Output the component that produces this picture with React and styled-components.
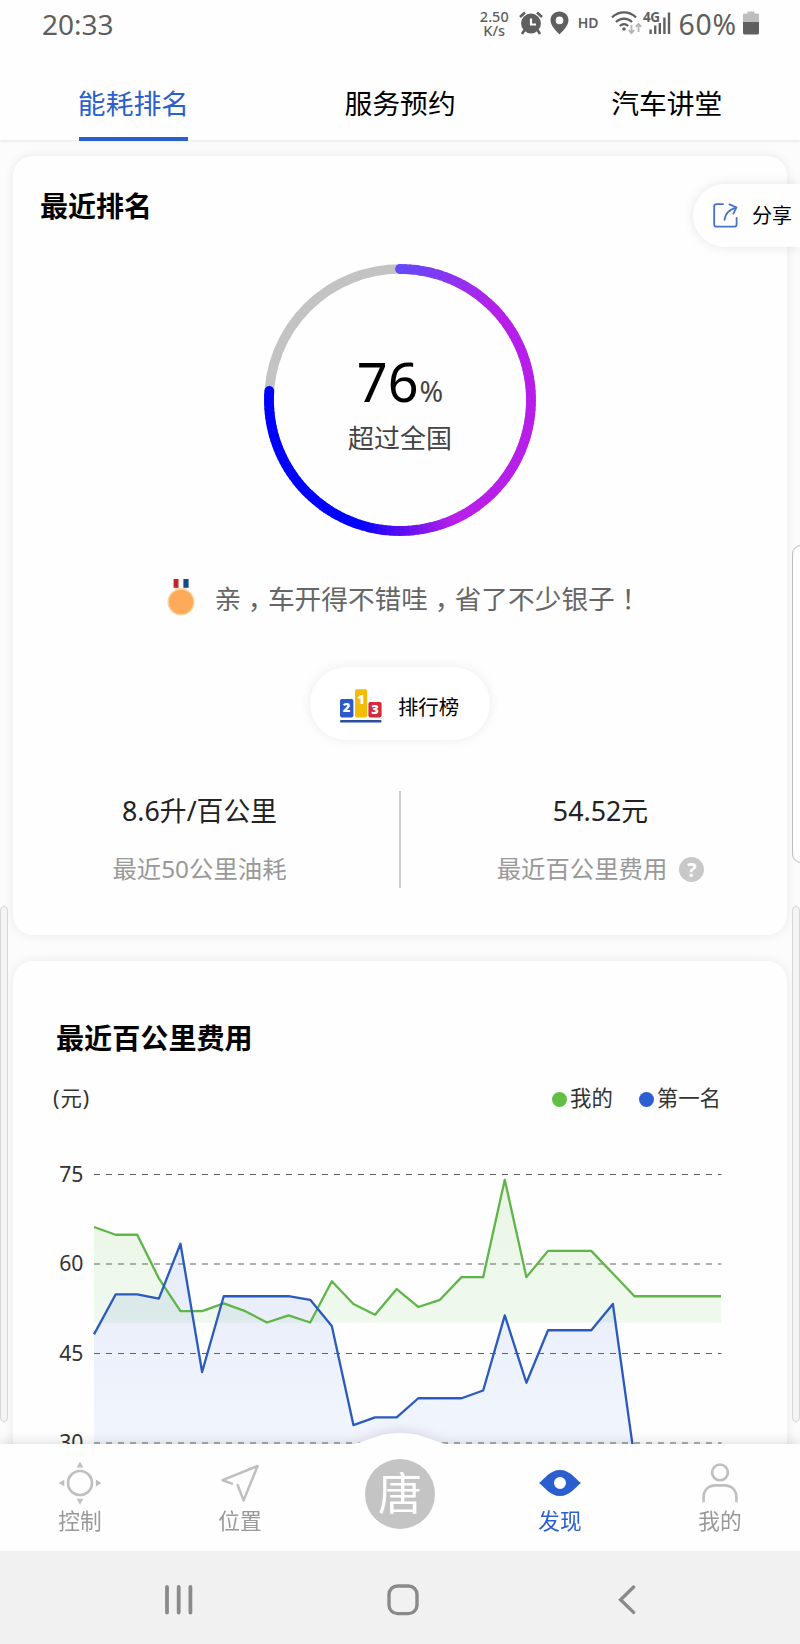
import React from 'react'
import styled, { createGlobalStyle } from 'styled-components';

const BLUE = '#2b5fd0';

const mine = [
  66.2, 64.9, 64.9, 57.6, 52.1, 52.1, 53.4, 52.1, 50.2, 51.4, 50.2, 57.1, 53.3, 51.5, 55.8,
  52.8, 54, 57.8, 57.8, 74.1, 57.8, 62.2, 62.2, 62.2, 58.4, 54.6, 54.6, 54.6, 54.6, 54.6,
];
const first = [
  48.2, 54.9, 54.9, 54.2, 63.4, 41.9, 54.6, 54.6, 54.6, 54.6, 54, 49.6, 33, 34.3, 34.3,
  37.5, 37.5, 37.5, 38.8, 51.4, 40.1, 48.9, 48.9, 48.9, 53.3, 27.3,
];

const CHART_LEFT = 81;
const CHART_RIGHT = 708.5;
const toX = (i) => CHART_LEFT + i * 21.62;
const toY = (v) => 34.5 + (75 - v) * 5.967;
const toLine = (data) => data.map((v, i) => `${toX(i)},${toY(v)}`).join(' ');

const CostChart = () => (
  <ChartSvg viewBox="0 0 774 340">
    <defs>
      <linearGradient id="mineFill" x1="0" y1="0" x2="0" y2="1">
        <stop offset="0" stopColor="#5fc044" stopOpacity="0.13" />
        <stop offset="1" stopColor="#5fc044" stopOpacity="0.09" />
      </linearGradient>
      <linearGradient id="firstFill" x1="0" y1="0" x2="0" y2="1">
        <stop offset="0" stopColor="#2b5fd0" stopOpacity="0.12" />
        <stop offset="1" stopColor="#3b6fe8" stopOpacity="0.05" />
      </linearGradient>
    </defs>
    {[75, 60, 45, 30].map((v) => (
      <g key={v}>
        <AxisLabel x="70.5" y={toY(v) + 7}>{v}</AxisLabel>
        <line x1={CHART_LEFT} x2={CHART_RIGHT} y1={toY(v)} y2={toY(v)} stroke="#606060" strokeWidth="1.2" strokeDasharray="6 6" />
      </g>
    ))}
    <polygon points={`${toLine(mine)} ${toX(29)},${toY(50.2)} ${toX(0)},${toY(50.2)}`} fill="url(#mineFill)" />
    <polygon points={`${toLine(first)} ${toX(25)},340 ${toX(0)},340`} fill="url(#firstFill)" />
    <polyline points={toLine(mine)} fill="none" stroke="#5fb548" strokeWidth="2.3" strokeLinejoin="round" />
    <polyline points={toLine(first)} fill="none" stroke="#2a5abf" strokeWidth="2.3" strokeLinejoin="round" />
  </ChartSvg>
);

// sweep stops of the ring: angle, then rgb
const stops = [
  [0, [101, 72, 248]],
  [45, [182, 31, 233]],
  [155, [184, 31, 232]],
  [180, [84, 14, 244]],
  [198, [0, 0, 255]],
  [274, [0, 0, 255]],
];

const sweepColor = (deg) => {
  const i = Math.max(1, stops.findIndex((s) => s[0] >= deg));
  const [a, from] = stops[i - 1];
  const [b, to] = stops[i];
  const t = (deg - a) / (b - a);
  return `rgb(${from.map((c, k) => Math.round(c + (to[k] - c) * t)).join(',')})`;
};

const ringPoint = (deg) => {
  const rad = (deg * Math.PI) / 180;
  return `${136 + 131 * Math.sin(rad)} ${136 - 131 * Math.cos(rad)}`;
};

const Ring = ({ percent }) => {
  const end = Math.round(percent * 3.6);
  const parts = [];
  for (let d = 0; d < end; d += 2) parts.push(d);
  return (
    <svg width="272" height="272" viewBox="0 0 272 272">
      <circle cx="136" cy="136" r="131" fill="none" stroke="#c3c3c3" strokeWidth="9.6" />
      {parts.map((d) => (
        <path
          key={d}
          d={`M${ringPoint(d)} A131 131 0 0 1 ${ringPoint(Math.min(d + 2.4, end))}`}
          fill="none"
          stroke={sweepColor(d)}
          strokeWidth="9.8"
          strokeLinecap={d === 0 || d + 2 >= end ? 'round' : 'butt'}
        />
      ))}
    </svg>
  );
};

const AlarmIcon = () => (
  <svg width="24" height="24" viewBox="0 0 24 24">
    <g stroke="#5f5f5f" strokeWidth="2.6" fill="none">
      <path d="M1 6 L6 1.6 M18 1.6 L23 6" />
      <path d="M5.5 19 L3 23 M18.5 19 L21 23" />
    </g>
    <circle cx="12" cy="12.5" r="9.9" fill="#5f5f5f" />
    <path d="M12 7.5 V13.5 H17" fill="none" stroke="#fff" strokeWidth="2.2" />
  </svg>
);

const PinIcon = () => (
  <svg width="19" height="24" viewBox="0 0 19 24">
    <path fillRule="evenodd" fill="#5f5f5f" d="M9.5 0.5 C4.4 0.5 0.5 4.4 0.5 9.2 C0.5 15.5 9.5 23.4 9.5 23.4 S18.5 15.5 18.5 9.2 C18.5 4.4 14.6 0.5 9.5 0.5 Z M9.5 5.6 A3.8 3.8 0 1 1 9.5 13.2 A3.8 3.8 0 1 1 9.5 5.6 Z" />
  </svg>
);

const WifiIcon = () => (
  <svg width="31" height="25" viewBox="0 0 31 25">
    <g fill="none" stroke="#5f5f5f" strokeWidth="2.2">
      <path d="M1 6.4 C8 -0.2 18 -0.2 25 6.4" />
      <path d="M5 11 C9.6 6.6 16.4 6.6 21 11" />
      <path d="M8.8 15 C11.4 12.6 14.6 12.6 17.2 15" />
    </g>
    <circle cx="13" cy="18" r="1.8" fill="#5f5f5f" />
    <g fill="none" stroke="#b5b5b5" strokeWidth="1.8">
      <path d="M20.5 14 V22 M17.8 19.2 L20.5 22.2 L23.2 19.2" />
      <path d="M27.5 21 V13 M24.8 15.8 L27.5 12.8 L30.2 15.8" />
    </g>
  </svg>
);

const SignalIcon = () => (
  <svg width="27" height="24" viewBox="0 0 27 24" overflow="visible">
    <SignalText x="-1" y="10.5">4G</SignalText>
    <g fill="#5f5f5f">
      <rect x="5.4" y="18.5" width="2.4" height="4.5" />
      <rect x="10" y="14.5" width="2.4" height="8.5" />
      <rect x="14.6" y="12" width="2.4" height="11" />
      <rect x="19.2" y="6.5" width="2.4" height="16.5" />
      <rect x="23.8" y="1.5" width="2.4" height="21.5" />
    </g>
  </svg>
);

const BatteryIcon = () => (
  <svg width="16" height="24" viewBox="0 0 16 24">
    <path d="M4.5 0.5 H11.5 V2.5 H15 Q16 2.5 16 3.5 V12 H0 V3.5 Q0 2.5 1 2.5 H4.5 Z" fill="#bdbdbd" />
    <path d="M0 11 H16 V22 Q16 23.5 14.5 23.5 H1.5 Q0 23.5 0 22 Z" fill="#5f5f5f" />
  </svg>
);

const ShareIcon = () => (
  <svg width="25" height="25" viewBox="0 0 25 25" fill="none" stroke="#4773c4" strokeWidth="1.8" strokeLinecap="round">
    <path d="M10 1.2 H3.4 Q1.2 1.2 1.2 3.4 V21.4 Q1.2 23.6 3.4 23.6 H21.4 Q23.6 23.6 23.6 21.4 V15" />
    <path d="M11.5 16.8 C12 11.5 15.5 7 22.8 4.6" />
    <path d="M16.4 1.4 L23.4 4.4 L20.4 10.6" />
  </svg>
);

const MedalIcon = () => (
  <svg width="30" height="40" viewBox="0 0 30 40">
    <path d="M8.5 13 L9.5 9 H20.5 L21.5 13 Z" fill="#fbe3c4" />
    <rect x="7.6" y="0" width="5.2" height="8.8" fill="#c0222e" />
    <rect x="12.6" y="0" width="5" height="8.8" fill="#fafafa" />
    <rect x="17.4" y="0" width="5.2" height="8.8" fill="#154a8c" />
    <circle cx="15" cy="23" r="13.6" fill="#fbd7a5" />
    <circle cx="15" cy="23" r="12.2" fill="#fdab5b" />
  </svg>
);

const PodiumIcon = () => (
  <svg width="42" height="35" viewBox="0 0 42 35">
    <rect x="0" y="10" width="13.4" height="18.4" rx="1.8" fill="#2c5acb" />
    <rect x="15" y="0.3" width="12.2" height="28.1" rx="1.8" fill="#f2bd08" />
    <rect x="28.4" y="13" width="13.2" height="15.4" rx="1.8" fill="#d32a3c" />
    <rect x="0" y="31" width="41.5" height="2.6" rx="1.2" fill="#2b4f9d" />
    <PodiumText x="6.6" y="22.6">2</PodiumText>
    <PodiumText x="21" y="14.6">1</PodiumText>
    <PodiumText x="35" y="24.8">3</PodiumText>
  </svg>
);

const ControlIcon = () => (
  <svg width="44" height="44" viewBox="0 0 44 44">
    <circle cx="22" cy="22" r="12" fill="none" stroke="#bfbfbf" strokeWidth="2.6" />
    <path fill="#bfbfbf" d="M22 0.5 L25.3 6.5 H18.7 Z M22 43.5 L25.3 37.8 H18.7 Z M0.5 22 L6.3 18.7 V25.3 Z M43.5 22 L37.9 18.4 V25.6 Z" />
  </svg>
);

const LocationIcon = () => (
  <svg width="40" height="40" viewBox="0 0 40 40" fill="none" stroke="#bfbfbf" strokeWidth="2.5" strokeLinejoin="round" strokeLinecap="round">
    <path d="M12 20.6 L2.6 17.2 L37.6 3 L23.6 37.4 L17.6 22" />
  </svg>
);

const EyeIcon = () => (
  <svg width="42" height="28" viewBox="0 0 42 28">
    <path fillRule="evenodd" fill={BLUE} d="M0 14 C6 9.5 11 1 21 1 S36 9.5 42 14 C36 18.5 31 27 21 27 S6 18.5 0 14 Z M21 8 A6 6 0 1 0 21 20 A6 6 0 1 0 21 8 Z" />
  </svg>
);

const PersonIcon = () => (
  <svg width="36" height="40" viewBox="0 0 36 40" fill="none" stroke="#bfbfbf" strokeWidth="2.6">
    <circle cx="18" cy="9.4" r="7.9" />
    <path d="M1.6 39.2 V34.5 C1.6 27 6.5 22.4 13.5 22.4 H22.5 C29.5 22.4 34.4 27 34.4 34.5 V39.2" />
  </svg>
);

const App = () => {
  return (
    <Phone>
      <GlobalStyle />
      <StatusBar>
        <Clock>20:33</Clock>
        <Speed>
          <span>2.50</span>
          <span>K/s</span>
        </Speed>
        <StatusItem gap={10}><AlarmIcon /></StatusItem>
        <StatusItem gap={7}><PinIcon /></StatusItem>
        <Hd>HD</Hd>
        <StatusItem gap={12}><WifiIcon /></StatusItem>
        <StatusItem gap={2}><SignalIcon /></StatusItem>
        <BatteryText>60%</BatteryText>
        <StatusItem gap={6}><BatteryIcon /></StatusItem>
      </StatusBar>

      <Tabs>
        <Tab><TabLabel $active>能耗排名</TabLabel></Tab>
        <Tab><TabLabel>服务预约</TabLabel></Tab>
        <Tab><TabLabel>汽车讲堂</TabLabel></Tab>
      </Tabs>

      <Content>
        <RankCard>
          <RankTitle>最近排名</RankTitle>
          <RingBox>
            <Ring percent={76} />
            <RingText>
              <Percent>76<small>%</small></Percent>
              <RingCaption>超过全国</RingCaption>
            </RingText>
          </RingBox>
          <Message>
            <MedalIcon />
            <p>亲<Mark>，</Mark>车开得不错哇<Mark>，</Mark>省了不少银子<Mark>！</Mark></p>
          </Message>
          <RankButton>
            <PodiumIcon />
            <span>排行榜</span>
          </RankButton>
          <Stats>
            <Stat>
              <StatValue>8.6升/百公里</StatValue>
              <StatLabel>最近50公里油耗</StatLabel>
            </Stat>
            <Divider />
            <Stat>
              <StatValue>54.52元</StatValue>
              <StatLabel>最近百公里费用<Help>?</Help></StatLabel>
            </Stat>
          </Stats>
        </RankCard>

        <CostCard>
          <CostTitle>最近百公里费用</CostTitle>
          <LegendRow>
            <Unit>(元)</Unit>
            <Legend color="#5fc044">我的</Legend>
            <Legend color={BLUE}>第一名</Legend>
          </LegendRow>
          <CostChart />
        </CostCard>
      </Content>

      <ShareButton>
        <ShareIcon />
        <span>分享</span>
      </ShareButton>
      <EdgePanel />
      <EdgeBar $side="left" />
      <EdgeBar $side="right" />

      <BottomNav>
        <Bump viewBox="0 0 120 20">
          <path d="M0 20 V12.5 H8 C24 12.5 34 1 60 1 S96 12.5 112 12.5 H120 V20 Z" fill="#fefefe" />
        </Bump>
        <NavItem>
          <NavIcon><ControlIcon /></NavIcon>
          <span>控制</span>
        </NavItem>
        <NavItem>
          <NavIcon><LocationIcon /></NavIcon>
          <span>位置</span>
        </NavItem>
        <NavItem>
          <CarLogo>唐</CarLogo>
        </NavItem>
        <NavItem $active>
          <NavIcon><EyeIcon /></NavIcon>
          <span>发现</span>
        </NavItem>
        <NavItem>
          <NavIcon><PersonIcon /></NavIcon>
          <span>我的</span>
        </NavItem>
      </BottomNav>

      <SystemNav>
        <SystemKey>
          <svg width="30" height="32" viewBox="0 0 30 32" stroke="#8a8a8a" strokeWidth="3.8" strokeLinecap="round">
            <path d="M3 3 V28.5 M14.7 3 V28.5 M26.4 3 V28.5" />
          </svg>
        </SystemKey>
        <SystemKey>
          <svg width="32" height="32" viewBox="0 0 32 32" fill="none" stroke="#8a8a8a" strokeWidth="3.4">
            <rect x="2" y="2" width="28" height="27.6" rx="8.5" />
          </svg>
        </SystemKey>
        <SystemKey>
          <svg width="18" height="32" viewBox="0 0 18 32" fill="none" stroke="#8a8a8a" strokeWidth="3.4" strokeLinecap="round">
            <path d="M15.6 3 L2.6 15.8 L15.6 28.4" />
          </svg>
        </SystemKey>
      </SystemNav>
    </Phone>
  );
};

export default App;

const GlobalStyle = createGlobalStyle`
* {
  box-sizing: border-box;
}

body {
  margin: 0;
  background: #fefefe;
}

p {
  margin: 0;
}

svg {
  display: block;
  flex-shrink: 0;
}
`;

const Phone = styled.div`
  position: relative;
  display: flex;
  flex-direction: column;
  width: 800px;
  height: 1644px;
  overflow: hidden;
  background: #fcfcfc;
  color: #000;
  font-family: "Noto Sans", "Noto Sans CJK SC", sans-serif;
`;

const StatusBar = styled.div`
  position: relative;
  z-index: 2;
  display: flex;
  align-items: center;
  height: 50px;
  padding: 0 41px 4px 42px;
  background: #fefefe;
  color: #5f5f5f;
`;

const Clock = styled.div`
  flex: 1;
  font-size: 28px;
  line-height: 40px;
  padding-top: 2px;
`;

const Speed = styled.div`
  display: flex;
  flex-direction: column;
  align-items: center;
  font-size: 14.5px;
  font-weight: 500;
  line-height: 14px;
`;

const StatusItem = styled.div`
  margin-left: ${(props) => props.gap}px;
`;

const Hd = styled.div`
  margin-left: 9px;
  font-size: 14px;
  font-weight: 600;
  line-height: 20px;
`;

const SignalText = styled.text`
  font-size: 13.5px;
  font-weight: 700;
  letter-spacing: -0.5px;
  fill: #5f5f5f;
`;

const BatteryText = styled.div`
  margin-left: 8px;
  font-size: 28.4px;
  line-height: 40px;
  letter-spacing: 0.8px;
  padding-top: 2px;
`;

const Tabs = styled.div`
  position: relative;
  z-index: 1;
  display: flex;
  height: 90px;
  background: #fefefe;
  box-shadow: 0 1px 4px rgba(0, 0, 0, 0.09);
`;

const Tab = styled.div`
  display: flex;
  flex: 1;
  justify-content: center;
`;

const TabLabel = styled.div`
  width: 109px;
  height: 91px;
  padding-top: 33px;
  font-size: 27.8px;
  line-height: 40px;
  text-indent: -1px;
  white-space: nowrap;
  color: ${(props) => (props.$active ? BLUE : '#000')};
  border-bottom: 4px solid ${(props) => (props.$active ? BLUE : 'transparent')};
`;

const Content = styled.div`
  flex: 1;
  min-height: 0;
  padding: 16px 13px 0;
  overflow: hidden;
`;

const Card = styled.section`
  background: #fefefe;
  border-radius: 20px;
  box-shadow: 0 0 12px rgba(0, 0, 0, 0.08);
`;

const RankCard = styled(Card)`
  display: flex;
  flex-direction: column;
  align-items: center;
  height: 779px;
  padding-top: 30px;
`;

const RankTitle = styled.h2`
  align-self: flex-start;
  margin: 0 0 38px 27px;
  font-size: 28px;
  font-weight: 600;
  line-height: 40px;
`;

const RingBox = styled.div`
  display: grid;
  place-items: center;

  > * {
    grid-area: 1 / 1;
  }
`;

const RingText = styled.div`
  display: flex;
  flex-direction: column;
  align-items: center;
  padding-top: 9px;
`;

const Percent = styled.div`
  font-size: 54px;
  line-height: 58px;

  small {
    margin-left: 1px;
    font-size: 28.5px;
    color: #444;
  }
`;

const RingCaption = styled.div`
  margin-top: -2px;
  font-size: 26px;
  line-height: 40px;
  color: #444;
`;

const Message = styled.div`
  display: flex;
  align-items: center;
  gap: 19px;
  margin: 43px 0 0 7px;
  font-size: 26.7px;
  line-height: 40px;
  color: #666;
`;

// half-width form of the punctuation, set in the middle of a full cell
const Mark = styled.span`
  padding: 0 0.25em;
  font-feature-settings: "halt";
`;

const RankButton = styled.button`
  display: flex;
  align-items: center;
  justify-content: center;
  gap: 16px;
  width: 180px;
  height: 73px;
  margin-top: 48px;
  padding: 6px 1px 0 0;
  border: 0;
  border-radius: 37px;
  background: #fff;
  box-shadow: 0 0 12px rgba(0, 0, 0, 0.08);
  color: #000;
  font-family: inherit;
  font-size: 20.4px;
  line-height: 30px;
`;

const PodiumText = styled.text`
  font-family: "Open Sans", sans-serif;
  font-size: 13px;
  font-weight: 800;
  text-anchor: middle;
  fill: #fff;
`;

const Stats = styled.div`
  display: flex;
  flex-shrink: 0;
  width: 800px;
  height: 97px;
  margin-top: 51px;
`;

const Stat = styled.div`
  display: flex;
  flex: 1;
  flex-direction: column;
  align-items: center;
  justify-content: space-between;
`;

const StatValue = styled.div`
  font-size: 26.8px;
  line-height: 40px;
  color: #222;
`;

const StatLabel = styled.div`
  display: flex;
  align-items: center;
  font-size: 24.4px;
  line-height: 38px;
  color: #999;
`;

const Divider = styled.div`
  width: 2px;
  background: #cbcbcb;
`;

const Help = styled.span`
  width: 25px;
  height: 25px;
  margin-left: 12px;
  border-radius: 50%;
  background: #c8c8c8;
  color: #fff;
  font-size: 20px;
  font-weight: 700;
  line-height: 25px;
  text-align: center;
`;

const CostCard = styled(Card)`
  height: 560px;
  margin-top: 26px;
  padding-top: 57px;
`;

const CostTitle = styled.h2`
  margin: 0 0 0 43px;
  font-size: 28.1px;
  font-weight: 600;
  line-height: 40px;
`;

const LegendRow = styled.div`
  display: flex;
  align-items: center;
  height: 40px;
  margin-top: 20px;
  padding: 0 66px 0 40px;
  font-size: 21.4px;
  line-height: 40px;
  color: #333;
`;

const Unit = styled.div`
  flex: 1;
  letter-spacing: 1px;
`;

const Legend = styled.div`
  display: flex;
  align-items: center;
  margin-left: 26px;

  &::before {
    content: "";
    width: 15px;
    height: 15px;
    margin: 3px 3px 0 0;
    border-radius: 50%;
    background: ${(props) => props.color};
  }
`;

const ChartSvg = styled.svg`
  width: 774px;
  height: 340px;
  margin-top: 22px;
`;

const AxisLabel = styled.text`
  font-size: 21.2px;
  text-anchor: end;
  fill: #333;
`;

const ShareButton = styled.div`
  position: absolute;
  top: 184px;
  right: 0;
  z-index: 2;
  display: flex;
  align-items: center;
  gap: 14px;
  width: 107px;
  height: 63px;
  padding-left: 20px;
  border-radius: 32px 0 0 32px;
  background: #fefefe;
  box-shadow: 0 0 12px rgba(0, 0, 0, 0.1);
  font-size: 20px;
  line-height: 30px;
  white-space: nowrap;
`;

const EdgePanel = styled.div`
  position: absolute;
  top: 545px;
  right: -12px;
  width: 20px;
  height: 318px;
  border: 1.5px solid #bdbdbd;
  border-radius: 9px;
  background: #fefefe;
`;

const EdgeBar = styled.div`
  position: absolute;
  top: 906px;
  ${(props) => props.$side}: 0;
  width: 8px;
  height: 516px;
  border: 1px solid #d6d6d6;
  border-radius: 4px;
  background: #f4f4f4;
`;

const BottomNav = styled.nav`
  position: relative;
  display: flex;
  height: 107px;
  background: #fefefe;
  filter: drop-shadow(0 -2px 6px rgba(0, 0, 0, 0.12));
`;

const Bump = styled.svg`
  position: absolute;
  top: -12px;
  left: 340px;
  width: 120px;
  height: 20px;
`;

const NavItem = styled.div`
  position: relative;
  display: flex;
  flex: 1;
  flex-direction: column;
  align-items: center;
  font-size: 21.7px;
  line-height: 30px;
  color: ${(props) => (props.$active ? BLUE : '#999')};
`;

const NavIcon = styled.div`
  display: flex;
  align-items: center;
  height: 46px;
  margin-top: 16px;
`;

const CarLogo = styled.div`
  width: 70px;
  height: 70px;
  margin-top: 15px;
  border-radius: 50%;
  background: #c4c4c4;
  color: #fff;
  font-size: 44px;
  line-height: 69px;
  text-align: center;
`;

const SystemNav = styled.div`
  position: relative;
  display: grid;
  grid-template-columns: repeat(3, 224px);
  align-items: center;
  height: 93px;
  padding: 4px 0 0 67px;
  background: #f1f1f1;
`;

const SystemKey = styled.div`
  display: flex;
  justify-content: center;
`;
